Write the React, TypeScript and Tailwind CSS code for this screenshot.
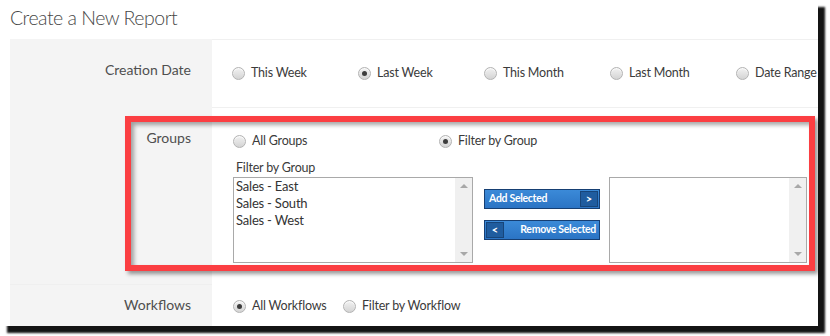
import React from 'react';

const font = { fontFamily: 'Lato, "Open Sans", sans-serif' };

const Radio: React.FC<{ checked?: boolean; label: string; className?: string }> = ({ checked, label, className }) => (
  <div className={`flex items-center h-4 whitespace-nowrap ${className ?? ''}`}>
    <span className="flex items-center justify-center w-[13px] h-[13px] rounded-full border border-[#b3b3b3] bg-gradient-to-b from-[#f2f2f2] to-[#d4d4d4] shadow-[inset_0_1px_1px_rgba(255,255,255,0.8)]">
      {checked && <span className="w-[5px] h-[5px] rounded-full bg-[#3d3d3d]" />}
    </span>
    <span className="ml-[6px] text-[12.5px] tracking-[-0.2px] leading-4 text-[#3b3b3b]">{label}</span>
  </div>
);

const Scrollbar: React.FC = () => (
  <div className="flex flex-col justify-between items-center w-[17px] h-full bg-[#f0f0f0] py-[6px]">
    <span className="w-0 h-0 border-l-[4px] border-r-[4px] border-b-[4px] border-l-transparent border-r-transparent border-b-[#a8a8a8]" />
    <span className="w-0 h-0 border-l-[4px] border-r-[4px] border-t-[4px] border-l-transparent border-r-transparent border-t-[#a8a8a8]" />
  </div>
);

const ListBox: React.FC<{ items: string[]; width: string }> = ({ items, width }) => (
  <div className={`flex h-[86px] border border-[#a9a9a9] bg-white ${width}`}>
    <div className="flex-1 pl-[2px]">
      {items.map((it) => (
        <div key={it} className="text-[13px] tracking-[-0.2px] leading-[17px] text-[#333]">{it}</div>
      ))}
    </div>
    <Scrollbar />
  </div>
);

const App: React.FC = () => {
  return (
    <div className="w-[830px] h-[336px] bg-white" style={font}>
      <div className="relative w-[818px] h-[326px] bg-white shadow-[7px_7px_2px_rgba(0,0,0,0.92)]">
        <h1 className="pl-[10px] pt-[5px] h-[39px] text-[19.5px] tracking-[-0.5px] leading-[26px] font-light text-[#474747]">Create a New Report</h1>

        <div className="ml-[10px] flex flex-col">
          {/* Creation Date */}
          <div className="flex h-[68px]">
            <div className="w-[202px] bg-[#f4f4f4] text-right pr-[21px] pt-[21px] text-[14px] leading-5 text-[#4f4f4f]">Creation Date</div>
            <div className="flex-1 border-t border-[#f0f0f0] pl-[20px] pt-[25px] flex">
              <Radio label="This Week" className="w-[126px]" />
              <Radio label="Last Week" checked className="w-[126px]" />
              <Radio label="This Month" className="w-[126px]" />
              <Radio label="Last Month" className="w-[126px]" />
              <Radio label="Date Range" />
            </div>
          </div>

          {/* Groups */}
          <div className="flex h-[177px]">
            <div className="w-[202px] bg-[#f4f4f4] text-right pr-[21px] pt-[21px] text-[14px] leading-5 text-[#4f4f4f]">Groups</div>
            <div className="flex-1 border-t border-[#f0f0f0] pl-[21px] pt-[25px]">
              <div className="flex">
                <Radio label="All Groups" className="w-[206px]" />
                <Radio label="Filter by Group" checked />
              </div>
              <div className="mt-[11px] ml-[3px] text-[12.5px] tracking-[-0.2px] leading-4 text-[#3b3b3b]">Filter by Group</div>
              <div className="mt-[1px] flex">
                <ListBox items={['Sales - East', 'Sales - South', 'Sales - West']} width="w-[240px]" />
                <div className="ml-[11px] pt-[12px] flex flex-col gap-[11px] w-[116px]">
                  <button className="flex items-center justify-between h-[20px] border border-[#163f73] bg-gradient-to-b from-[#3b8ad8] to-[#2b74c4] pl-[4px] pr-[1px]">
                    <span className="text-[10.5px] font-bold tracking-[-0.3px] text-white">Add Selected</span>
                    <span className="flex items-center justify-center w-[18px] h-[16px] bg-[#1f5c9f] border border-[#17457a] text-white text-[11px] font-bold">&gt;</span>
                  </button>
                  <button className="flex items-center justify-between h-[20px] border border-[#163f73] bg-gradient-to-b from-[#3b8ad8] to-[#2b74c4] pl-[1px] pr-[3px]">
                    <span className="flex items-center justify-center w-[18px] h-[16px] bg-[#1f5c9f] border border-[#17457a] text-white text-[11px] font-bold">&lt;</span>
                    <span className="text-[10.5px] font-bold tracking-[-0.3px] text-white">Remove Selected</span>
                  </button>
                </div>
                <div className="ml-[9px]">
                  <ListBox items={[]} width="w-[198px]" />
                </div>
              </div>
            </div>
          </div>

          {/* Workflows */}
          <div className="flex h-[42px]">
            <div className="w-[202px] bg-[#f4f4f4] border-t border-[#efefef] text-right pr-[21px] pt-[10px] text-[14px] leading-5 text-[#4f4f4f]">Workflows</div>
            <div className="flex-1 pl-[21px] pt-[14px] flex">
              <Radio label="All Workflows" checked className="w-[110px]" />
              <Radio label="Filter by Workflow" />
            </div>
          </div>
        </div>

        {/* annotation highlight */}
        <div className="absolute left-[125px] top-[116px] w-[690px] h-[155px] border-[6px] border-[#fb3e42] shadow-[3px_3px_4px_rgba(0,0,0,0.4),inset_3px_3px_4px_rgba(0,0,0,0.35)]" />
      </div>
    </div>
  );
};

export default App;
